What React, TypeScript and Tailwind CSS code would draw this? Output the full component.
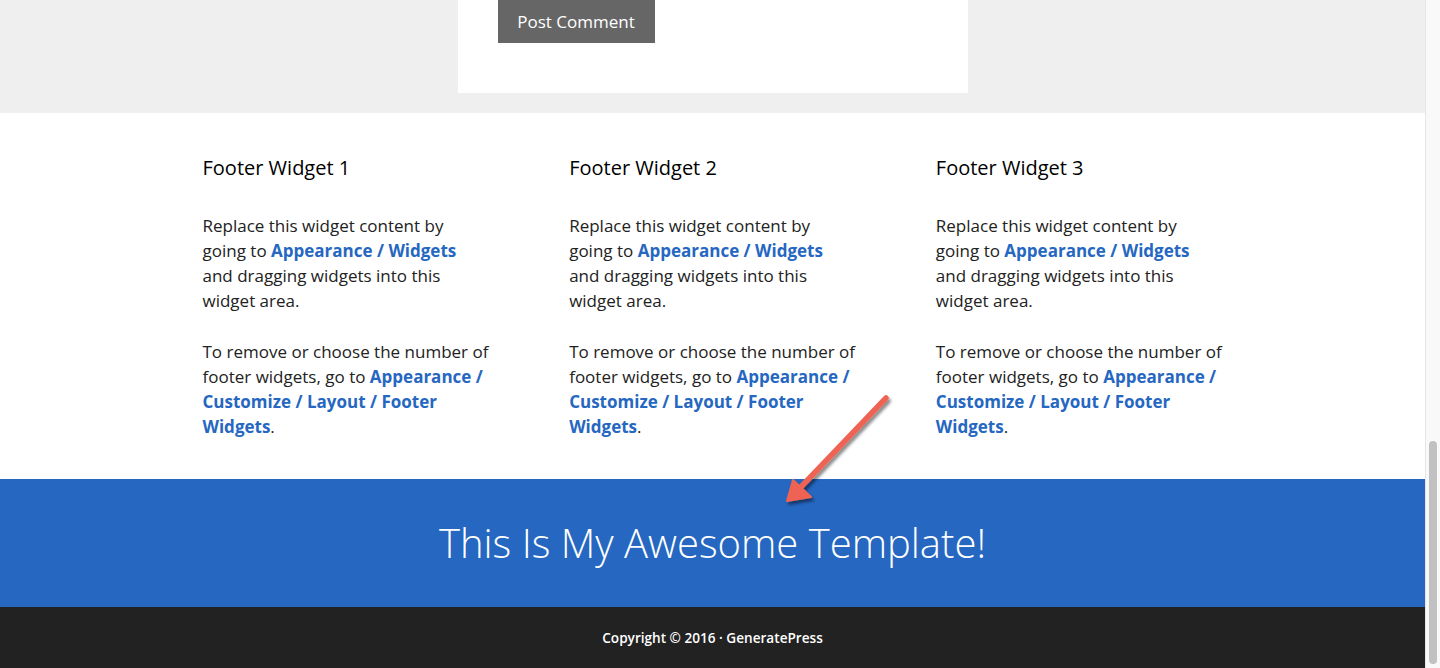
import React from "react"

const font = { fontFamily: '"Open Sans", "Liberation Sans", sans-serif' }

function Widget({ n }: { n: number }) {
  const link = "font-bold text-[#2567c1]"
  return (
    <div className="px-10">
      <h4 className="text-[20px] leading-[30px] text-black mb-[30px]">Footer Widget {n}</h4>
      <p className="text-[17px] leading-[25px] text-[#222] mb-[26px]">
        Replace this widget content by going to <a className={link}>Appearance / Widgets</a> and dragging widgets into this widget area.
      </p>
      <p className="text-[17px] leading-[25px] text-[#222]">
        To remove or choose the number of footer widgets, go to{" "}
        <a className={link}>Appearance / Customize / Layout / Footer Widgets</a>.
      </p>
    </div>
  )
}

export default function App() {
  return (
    <div className="flex w-[1440px] h-[668px] overflow-hidden" style={font}>
      <div className="relative flex-1 flex flex-col">
        <div className="bg-[#efefef] h-[113px] flex justify-center">
          <div className="bg-white w-[510px] h-[93px] px-10">
            <button className="bg-[#666] text-white text-[17px] font-medium h-[43px] w-[157px] whitespace-nowrap flex items-center justify-center">
              Post Comment
            </button>
          </div>
        </div>
        <div className="bg-white h-[366px]">
          <div className="w-[1100px] mx-auto grid grid-cols-3 pt-[40px]">
            <Widget n={1} />
            <Widget n={2} />
            <Widget n={3} />
          </div>
        </div>
        <div className="bg-[#2567c1] h-[128px] flex items-center justify-center">
          <h2 className="text-white text-[40px] font-light leading-none">This Is My Awesome Template!</h2>
        </div>
        <div className="bg-[#222] flex-1 flex items-center justify-center pt-[2px]">
          <span className="text-white text-[13.6px] font-semibold">Copyright © 2016 · GeneratePress</span>
        </div>
        <svg className="absolute left-[770px] top-[385px] pointer-events-none" width="130" height="130" viewBox="770 385 130 130">
          <defs>
            <filter id="sh" x="-20%" y="-20%" width="150%" height="150%">
              <feDropShadow dx="2" dy="3" stdDeviation="1.5" floodColor="#000" floodOpacity="0.45" />
            </filter>
          </defs>
          <g filter="url(#sh)">
            <line x1="886" y1="398" x2="800" y2="488" stroke="#ee6352" strokeWidth="5.5" strokeLinecap="round" />
            <polygon points="787,501 793,480 811,497" fill="#ee6352" stroke="#ee6352" strokeWidth="2" strokeLinejoin="round" />
          </g>
        </svg>
      </div>
      <div className="relative w-[15px] bg-[#f9f9f9] border-l border-[#e6e6e6]">
        <div className="absolute left-[3px] top-[441px] w-[8px] h-[223px] rounded-full bg-[#c1c1c1]" />
      </div>
    </div>
  )
}
